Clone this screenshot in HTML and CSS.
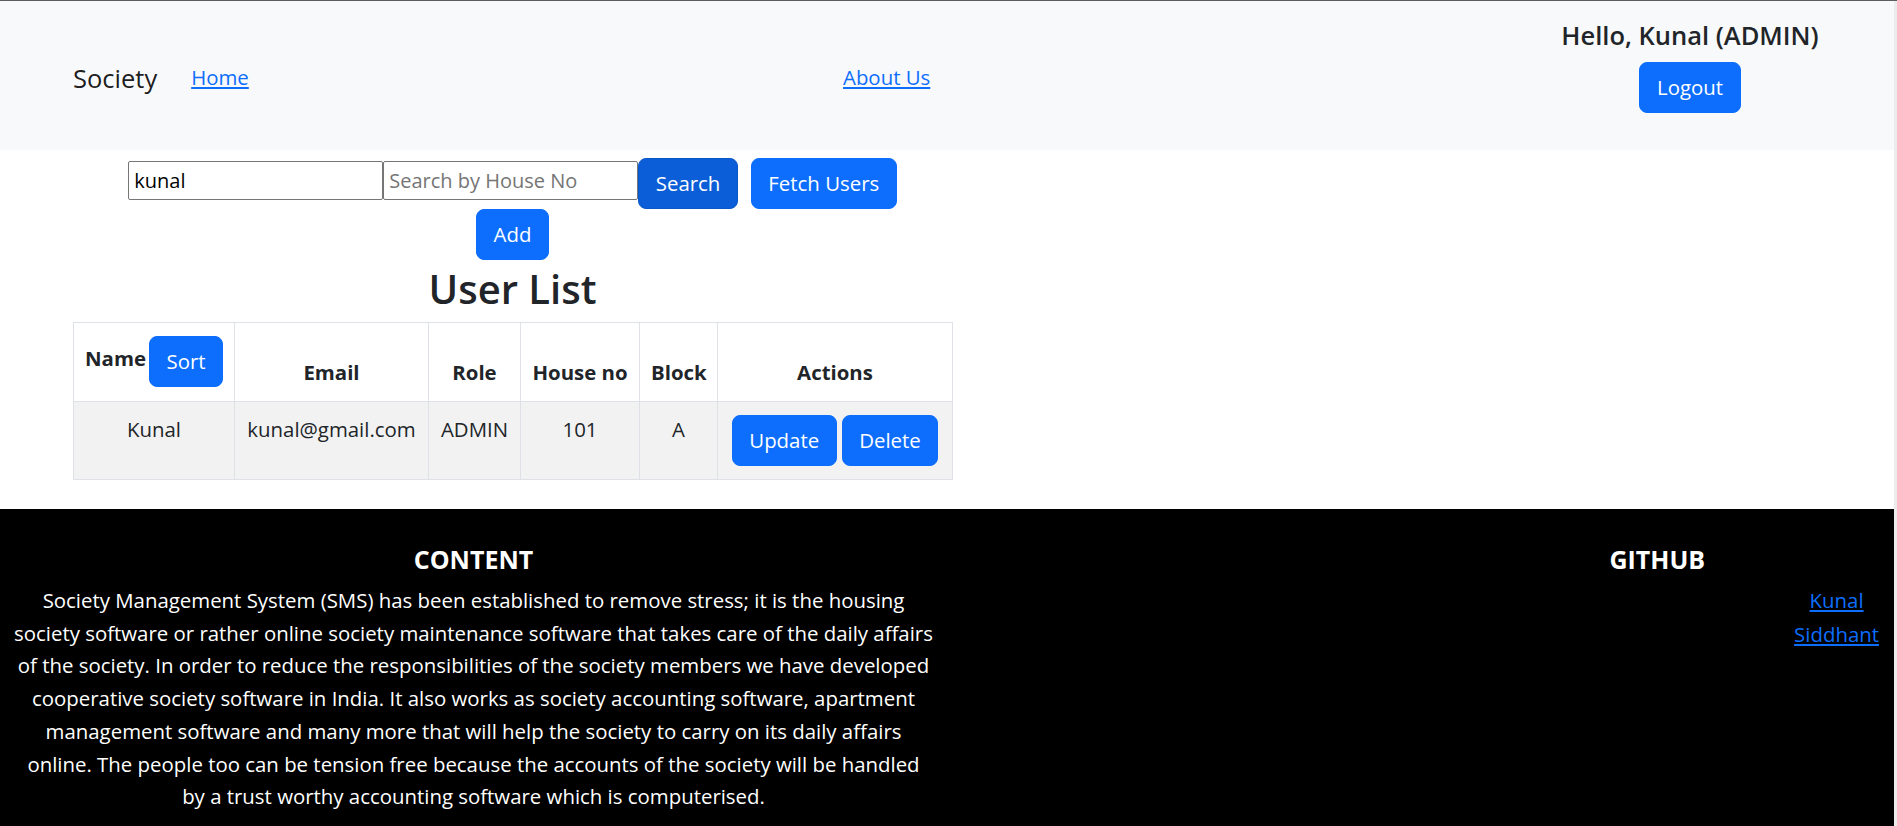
FILE: index.html
```html
<!DOCTYPE html>
<html lang="en">
<head>
<meta charset="utf-8">
<title>Society</title>
<link rel="stylesheet" href="styles.css">
</head>
<body>
<nav class="navbar">
  <div class="nav-left">
    <a class="brand" href="#">Society</a>
    <a class="nav-link" href="#">Home</a>
  </div>
  <a class="nav-link" href="#">About Us</a>
  <div class="user-box">
    <h5 class="hello">Hello, Kunal (ADMIN)</h5>
    <button class="btn">Logout</button>
  </div>
</nav>

<main class="main">
  <div class="search-row">
    <input class="search-input" type="text" value="kunal"><input class="search-input" type="text" placeholder="Search by House No"><button class="btn btn-active">Search</button><button class="btn btn-fetch">Fetch Users</button>
  </div>
  <div class="add-row">
    <button class="btn">Add</button>
  </div>
  <h2 class="title">User List</h2>
  <table class="users">
    <colgroup>
      <col class="c-name"><col class="c-email"><col class="c-role"><col class="c-house"><col class="c-block"><col class="c-actions">
    </colgroup>
    <thead>
      <tr>
        <th><div class="name-head"><span class="name-label">Name</span><button class="btn btn-sort">Sort</button></div></th>
        <th>Email</th>
        <th>Role</th>
        <th>House no</th>
        <th>Block</th>
        <th>Actions</th>
      </tr>
    </thead>
    <tbody>
      <tr>
        <td>Kunal</td>
        <td>kunal@gmail.com</td>
        <td>ADMIN</td>
        <td>101</td>
        <td>A</td>
        <td><div class="action-btns"><button class="btn">Update</button><button class="btn">Delete</button></div></td>
      </tr>
    </tbody>
  </table>
</main>

<footer class="footer">
  <div class="content-col">
    <h5 class="footer-title">CONTENT</h5>
    <p class="footer-text">Society Management System (SMS) has been established to remove stress; it is the housing society software or rather online society maintenance software that takes care of the daily affairs of the society. In order to reduce the responsibilities of the society members we have developed cooperative society software in India. It also works as society accounting software, apartment management software and many more that will help the society to carry on its daily affairs online. The people too can be tension free because the accounts of the society will be handled by&nbsp;a trust worthy accounting software which is computerised.</p>
  </div>
  <div class="spacer-col"></div>
  <div class="github-col">
    <h5 class="footer-title">GITHUB</h5>
    <ul class="github-links">
      <li><a href="#">Kunal</a></li>
      <li><a href="#">Siddhant</a></li>
    </ul>
  </div>
</footer>
</body>
</html>
```

FILE: styles.css
```css
html {
  background: #ececec;
  border-top: 1px solid #5d5d5d;
}

body {
  margin: 0 3px 0 0;
  background: #fff;
  font-family: "Open Sans", "Noto Sans", sans-serif;
  font-size: 20.4px;
  line-height: 33.6px;
  color: #212529;
}

a {
  color: #0d6efd;
}

/* ---------- navbar ---------- */
.navbar {
  display: flex;
  align-items: center;
  box-sizing: border-box;
  height: 149px;
  padding: 5px 0 0 73px;
  background: #f8f9fa;
}

.nav-left {
  width: 770px;
  display: flex;
  align-items: center;
}

.brand {
  font-size: 25.5px;
  line-height: 38px;
  color: rgba(0, 0, 0, 0.9);
  text-decoration: none;
  margin-right: 34px;
}

.nav-link {
  color: #0d6efd;
  text-decoration: underline;
}

.user-box {
  align-self: flex-start;
  margin: 13.5px 54px 0 auto;
  width: 300px;
  display: flex;
  flex-direction: column;
  align-items: center;
}

.hello {
  margin: 0 0 12px;
  font-size: 25.5px;
  font-weight: 600;
  line-height: 30.6px;
  color: #212529;
  white-space: nowrap;
}

/* ---------- buttons ---------- */
.btn {
  font-family: inherit;
  font-size: 20.4px;
  line-height: 33px;
  padding: 8px 16.5px;
  border: 1px solid #0d6efd;
  border-radius: 8px;
  background: #0d6efd;
  color: #fff;
  cursor: pointer;
  white-space: nowrap;
}

.btn-active {
  background: #0b5ed7;
  border-color: #0a58ca;
}

.btn-fetch {
  margin-left: 13px;
}

/* ---------- main ---------- */
.main {
  margin-left: 73px;
  width: 879px;
}

.search-row {
  display: flex;
  justify-content: center;
  align-items: flex-start;
  padding-top: 8px;
}

.search-input {
  box-sizing: border-box;
  width: 255px;
  height: 39px;
  margin-top: 3px;
  padding: 0 5px;
  border: 1px solid #767676;
  border-radius: 2px;
  font-family: inherit;
  font-size: 20px;
  color: #000;
  background: #fff;
}

.search-input::placeholder {
  color: #757575;
}

.add-row {
  display: flex;
  justify-content: center;
}

.title {
  margin: 0;
  text-align: center;
  font-size: 40px;
  font-weight: 600;
  line-height: 58px;
  padding-bottom: 4px;
  color: #212529;
}

/* ---------- table ---------- */
.users {
  width: 879px;
  table-layout: fixed;
  border-collapse: collapse;
  margin-bottom: 29px;
}

.c-name { width: 161px; }
.c-email { width: 194px; }
.c-role { width: 92px; }
.c-house { width: 119px; }
.c-block { width: 78px; }
.c-actions { width: 235px; }

.users th,
.users td {
  border: 1px solid #dee2e6;
  padding: 11px;
  text-align: center;
}

.users th {
  vertical-align: bottom;
  font-weight: 700;
  white-space: nowrap;
}

.users td {
  vertical-align: top;
  background: #f2f2f2;
}

.name-head {
  display: flex;
  justify-content: center;
  align-items: flex-start;
  gap: 3px;
}

.name-label {
  margin-top: 8px;
}

.btn-sort {
  margin: 2px 0 3px;
}

.action-btns {
  display: flex;
  justify-content: center;
  gap: 5px;
  margin: 2px 0;
}

/* ---------- footer ---------- */
.footer {
  display: grid;
  grid-template-columns: 2fr 1fr 1fr;
  background: #000;
  color: #fff;
  padding: 35px 0 16px;
}

.content-col {
  text-align: center;
  padding: 0 12px;
}

.github-col {
  text-align: center;
}

.footer-title {
  margin: 0 0 10px;
  font-size: 25px;
  font-weight: 700;
  line-height: 30px;
}

.footer-text {
  margin: 0;
  line-height: 32.7px;
}

.github-links {
  list-style: none;
  margin: 0 15px 0 auto;
  padding: 0;
  width: fit-content;
  text-align: center;
}
```
